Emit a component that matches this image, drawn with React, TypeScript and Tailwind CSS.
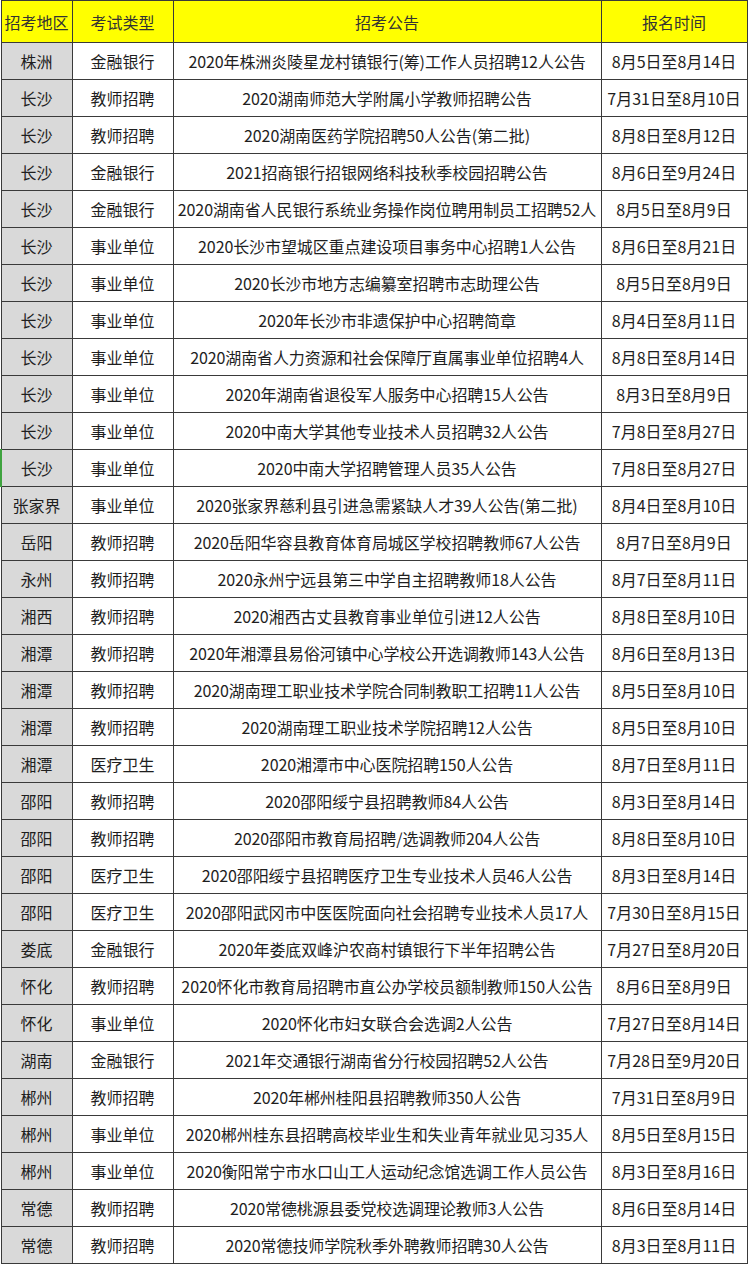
import React from "react";

const rows: [string, string, string, string][] = [
  ["株洲", "金融银行", "2020年株洲炎陵星龙村镇银行(筹)工作人员招聘12人公告", "8月5日至8月14日"],
  ["长沙", "教师招聘", "2020湖南师范大学附属小学教师招聘公告", "7月31日至8月10日"],
  ["长沙", "教师招聘", "2020湖南医药学院招聘50人公告(第二批)", "8月8日至8月12日"],
  ["长沙", "金融银行", "2021招商银行招银网络科技秋季校园招聘公告", "8月6日至9月24日"],
  ["长沙", "金融银行", "2020湖南省人民银行系统业务操作岗位聘用制员工招聘52人", "8月5日至8月9日"],
  ["长沙", "事业单位", "2020长沙市望城区重点建设项目事务中心招聘1人公告", "8月6日至8月21日"],
  ["长沙", "事业单位", "2020长沙市地方志编纂室招聘市志助理公告", "8月5日至8月9日"],
  ["长沙", "事业单位", "2020年长沙市非遗保护中心招聘简章", "8月4日至8月11日"],
  ["长沙", "事业单位", "2020湖南省人力资源和社会保障厅直属事业单位招聘4人", "8月8日至8月14日"],
  ["长沙", "事业单位", "2020年湖南省退役军人服务中心招聘15人公告", "8月3日至8月9日"],
  ["长沙", "事业单位", "2020中南大学其他专业技术人员招聘32人公告", "7月8日至8月27日"],
  ["长沙", "事业单位", "2020中南大学招聘管理人员35人公告", "7月8日至8月27日"],
  ["张家界", "事业单位", "2020张家界慈利县引进急需紧缺人才39人公告(第二批)", "8月4日至8月10日"],
  ["岳阳", "教师招聘", "2020岳阳华容县教育体育局城区学校招聘教师67人公告", "8月7日至8月9日"],
  ["永州", "教师招聘", "2020永州宁远县第三中学自主招聘教师18人公告", "8月7日至8月11日"],
  ["湘西", "教师招聘", "2020湘西古丈县教育事业单位引进12人公告", "8月8日至8月10日"],
  ["湘潭", "教师招聘", "2020年湘潭县易俗河镇中心学校公开选调教师143人公告", "8月6日至8月13日"],
  ["湘潭", "教师招聘", "2020湖南理工职业技术学院合同制教职工招聘11人公告", "8月5日至8月10日"],
  ["湘潭", "教师招聘", "2020湖南理工职业技术学院招聘12人公告", "8月5日至8月10日"],
  ["湘潭", "医疗卫生", "2020湘潭市中心医院招聘150人公告", "8月7日至8月11日"],
  ["邵阳", "教师招聘", "2020邵阳绥宁县招聘教师84人公告", "8月3日至8月14日"],
  ["邵阳", "教师招聘", "2020邵阳市教育局招聘/选调教师204人公告", "8月8日至8月10日"],
  ["邵阳", "医疗卫生", "2020邵阳绥宁县招聘医疗卫生专业技术人员46人公告", "8月3日至8月14日"],
  ["邵阳", "医疗卫生", "2020邵阳武冈市中医医院面向社会招聘专业技术人员17人", "7月30日至8月15日"],
  ["娄底", "金融银行", "2020年娄底双峰沪农商村镇银行下半年招聘公告", "7月27日至8月20日"],
  ["怀化", "教师招聘", "2020怀化市教育局招聘市直公办学校员额制教师150人公告", "8月6日至8月9日"],
  ["怀化", "事业单位", "2020怀化市妇女联合会选调2人公告", "7月27日至8月14日"],
  ["湖南", "金融银行", "2021年交通银行湖南省分行校园招聘52人公告", "7月28日至9月20日"],
  ["郴州", "教师招聘", "2020年郴州桂阳县招聘教师350人公告", "7月31日至8月9日"],
  ["郴州", "事业单位", "2020郴州桂东县招聘高校毕业生和失业青年就业见习35人", "8月5日至8月15日"],
  ["郴州", "事业单位", "2020衡阳常宁市水口山工人运动纪念馆选调工作人员公告", "8月3日至8月16日"],
  ["常德", "教师招聘", "2020常德桃源县委党校选调理论教师3人公告", "8月6日至8月14日"],
  ["常德", "教师招聘", "2020常德技师学院秋季外聘教师招聘30人公告", "8月3日至8月11日"],
];

export default function App() {
  return (
    <div
      className="w-[750px] h-[1276px] bg-white text-[#1e1e1e]"
      style={{ fontFamily: '"Noto Sans CJK SC", "Noto Sans", sans-serif' }}
    >
      <table className="border-collapse table-fixed w-[746px] text-[16px] leading-none">
        <colgroup>
          <col className="w-[71px]" />
          <col className="w-[101px]" />
          <col className="w-[428px]" />
          <col className="w-[146px]" />
        </colgroup>
        <thead>
          <tr className="h-[42px] bg-[#ffff00] text-[#333]">
            <th className="border border-[#3a3a3a] font-normal whitespace-nowrap p-0">招考地区</th>
            <th className="border border-[#3a3a3a] font-normal p-0">考试类型</th>
            <th className="border border-[#3a3a3a] font-normal p-0">招考公告</th>
            <th className="border border-[#3a3a3a] font-normal p-0">报名时间</th>
          </tr>
        </thead>
        <tbody>
          {rows.map((r, i) => (
            <tr key={i} className="h-[37px]">
              <td
                className={
                  i === 11
                    ? "border border-[#3a3a3a] border-l-[#3fa33f] border-l-2 bg-[#d9d9d9] text-center p-0 whitespace-nowrap"
                    : "border border-[#3a3a3a] bg-[#d9d9d9] text-center p-0 whitespace-nowrap"
                }
              >
                {r[0]}
              </td>
              <td className="border border-[#3a3a3a] text-center p-0 whitespace-nowrap">{r[1]}</td>
              <td className="border border-[#3a3a3a] text-center p-0 whitespace-nowrap tracking-[-0.1px]">{r[2]}</td>
              <td className="border border-[#3a3a3a] text-center p-0 whitespace-nowrap">{r[3]}</td>
            </tr>
          ))}
        </tbody>
      </table>
    </div>
  );
}
